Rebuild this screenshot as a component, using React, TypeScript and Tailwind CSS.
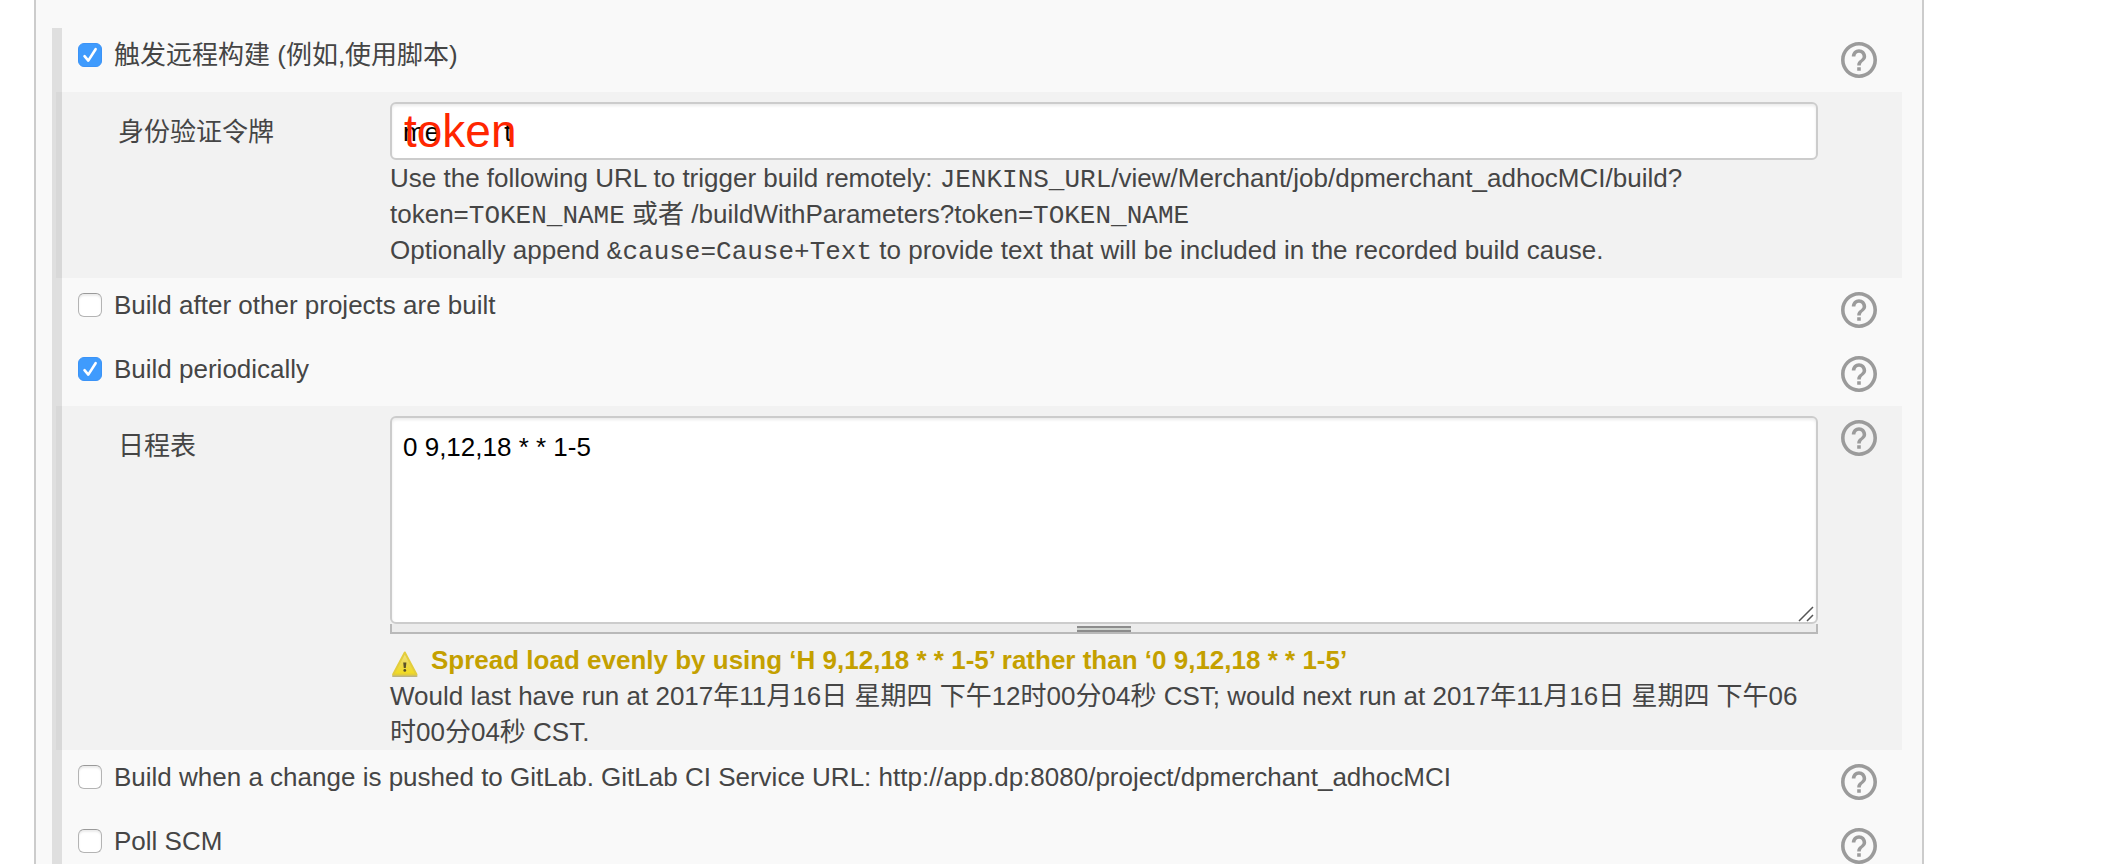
import { useState, type ReactNode } from "react";

function HelpButton({ topic }: { topic: string }) {
  return (
    <button type="button" aria-label={`Help: ${topic}`} className="size-9 shrink-0 text-[#9b9b9b]">
      <svg viewBox="2 2 20 20" className="size-9" fill="currentColor" aria-hidden="true">
        <path d="M11 18h2v-2h-2v2zm1-16C6.48 2 2 6.48 2 12s4.48 10 10 10 10-4.48 10-10S17.52 2 12 2zm0 18c-4.41 0-8-3.59-8-8s3.59-8 8-8 8 3.59 8 8-3.59 8-8 8zm0-14c-2.21 0-4 1.79-4 4h2c0-1.1.9-2 2-2s2 .9 2 2c0 2-3 1.75-3 5h2c0-2.25 3-2.5 3-5 0-2.21-1.79-4-4-4z" />
      </svg>
    </button>
  );
}

function TriggerRow({ id, label, initial = false }: { id: string; label: string; initial?: boolean }) {
  const [checked, setChecked] = useState(initial);
  return (
    <div className="flex h-16 items-start justify-between pr-[25px] pl-4">
      <div className="flex items-center gap-3 pt-2">
        <span className="grid size-6 place-items-center">
          <input
            id={id}
            type="checkbox"
            checked={checked}
            onChange={(e) => setChecked(e.target.checked)}
            className="col-start-1 row-start-1 size-6 appearance-none rounded-md border border-[#b4b4b4] border-t-[#9a9a9a] bg-white shadow-[inset_0_2px_2px_rgba(0,0,0,0.08)] checked:border-[#3b93f7] checked:bg-[#3f9bfd] checked:shadow-none"
          />
          {checked && (
            <svg viewBox="0 0 24 24" className="pointer-events-none col-start-1 row-start-1 size-6" fill="none" stroke="#fff" strokeWidth="2.6" strokeLinecap="round" strokeLinejoin="round" aria-hidden="true">
              <path d="M6.5 13.2 10.3 17.6 17.6 6.2" />
            </svg>
          )}
        </span>
        <label htmlFor={id} className="leading-[38px]">
          {label}
        </label>
      </div>
      <div className="pt-3.5">
        <HelpButton topic={label} />
      </div>
    </div>
  );
}

function SettingGroup({ id, label, help, children }: { id: string; label: string; help?: boolean; children: ReactNode }) {
  return (
    <section className="-ml-1.5 flex items-start bg-[#00000007] pt-2.5 pr-[25px] pl-[62px]">
      <label htmlFor={id} className="w-[272px] shrink-0 pt-3 leading-9">
        {label}
      </label>
      <div className="min-w-0 flex-1">{children}</div>
      <div className="ml-[23px] w-9 shrink-0 pt-1">{help && <HelpButton topic={label} />}</div>
    </section>
  );
}

function Mono({ children }: { children: ReactNode }) {
  return <code className="font-['Liberation_Mono',monospace] text-[26px] leading-none">{children}</code>;
}

function WarningIcon() {
  return (
    <svg viewBox="0 0 28 28" className="size-7 shrink-0" aria-hidden="true">
      <defs>
        <linearGradient id="warn" x1="0" y1="0" x2="0" y2="1">
          <stop offset="0" stopColor="#f2e48c" />
          <stop offset="0.55" stopColor="#ecd94a" />
          <stop offset="1" stopColor="#f3dc1c" />
        </linearGradient>
      </defs>
      <path d="M3 26h23.5" stroke="#a89a50" strokeWidth="2" strokeLinecap="round" opacity=".7" />
      <path d="M14.8 2.5 26.5 24.5h-23.4z" fill="url(#warn)" stroke="#e3cd3c" strokeWidth="2" strokeLinejoin="round" />
      <path d="M13.2 12.5h3.2l-.6 5.5h-2z" fill="#5a5128" />
      <circle cx="14.8" cy="20.4" r="1.4" fill="#5a5128" />
    </svg>
  );
}

export default function App() {
  const [token, setToken] = useState("me\u00a0\u00a0\u00a0\u00a0\u00a0\u00a0\u00a0\u00a0\u00a0t");
  const [schedule, setSchedule] = useState("0 9,12,18 * * 1-5");
  const field =
    "block w-full rounded-md border-2 border-[#ccc] bg-white px-[11px] text-black shadow-[inset_0_2px_3px_rgba(0,0,0,0.08)] outline-none";

  return (
    <main className="h-screen overflow-hidden bg-white pr-[178px] pl-[34px] font-['Liberation_Sans','Noto_Sans_CJK_SC',sans-serif] text-[26px] leading-9 text-[#454545]">
      <div className="min-h-full border-x-2 border-[#ccc] bg-[#f9f9f9] pt-7 pr-5 pl-4">
        <form className="border-l-10 border-[#dfdfdf]">
          <TriggerRow id="remote" label="触发远程构建 (例如,使用脚本)" initial />
          <SettingGroup id="token" label="身份验证令牌">
            <div className="relative">
              <input id="token" type="text" value={token} onChange={(e) => setToken(e.target.value)} className={`${field} h-[58px] pt-0.5`} />
              <span className="pointer-events-none absolute top-0 left-3.5 text-[46px] leading-[58px] text-[#ff2600]">token</span>
            </div>
            <p className="pb-2.5">
              Use the following URL to trigger build remotely: <Mono>JENKINS_URL</Mono>/view/Merchant/job/dpmerchant_adhocMCI/build?
              <br />
              token=<Mono>TOKEN_NAME</Mono> 或者 /buildWithParameters?token=<Mono>TOKEN_NAME</Mono>
              <br />
              Optionally append <Mono>&amp;cause=Cause+Text</Mono> to provide text that will be included in the recorded build cause.
            </p>
          </SettingGroup>
          <TriggerRow id="after" label="Build after other projects are built" />
          <TriggerRow id="periodic" label="Build periodically" initial />
          <SettingGroup id="schedule" label="日程表" help>
            <div className="relative">
              <textarea
                id="schedule"
                value={schedule}
                onChange={(e) => setSchedule(e.target.value)}
                className={`${field} h-[208px] resize-none py-[11px]`}
              />
              <svg viewBox="0 0 16 16" className="pointer-events-none absolute right-1 bottom-0.5 size-4" fill="none" stroke="#555" strokeWidth="1.5" aria-hidden="true">
                <path d="M1 15 15 1M9 15l6-6" />
              </svg>
            </div>
            <div className="flex h-2.5 justify-center border-x-2 border-b-2 border-[#b9b9b9] bg-[#ececec] pt-0.5">
              <div className="h-1.5 w-[54px] border-y-2 border-[#8c8c8c] bg-[#d0d4d0]" />
            </div>
            <div className="flex items-end gap-[13px] pt-2 font-bold text-[#c4a000]">
              <WarningIcon />
              <p>Spread load evenly by using ‘H 9,12,18 * * 1-5’ rather than ‘0 9,12,18 * * 1-5’</p>
            </div>
            <p>
              Would last have run at 2017年11月16日 星期四 下午12时00分04秒 CST; would next run at 2017年11月16日 星期四 下午06时00分04秒 CST.
            </p>
          </SettingGroup>
          <TriggerRow id="gitlab" label="Build when a change is pushed to GitLab. GitLab CI Service URL: http://app.dp:8080/project/dpmerchant_adhocMCI" />
          <TriggerRow id="poll" label="Poll SCM" />
        </form>
      </div>
    </main>
  );
}
